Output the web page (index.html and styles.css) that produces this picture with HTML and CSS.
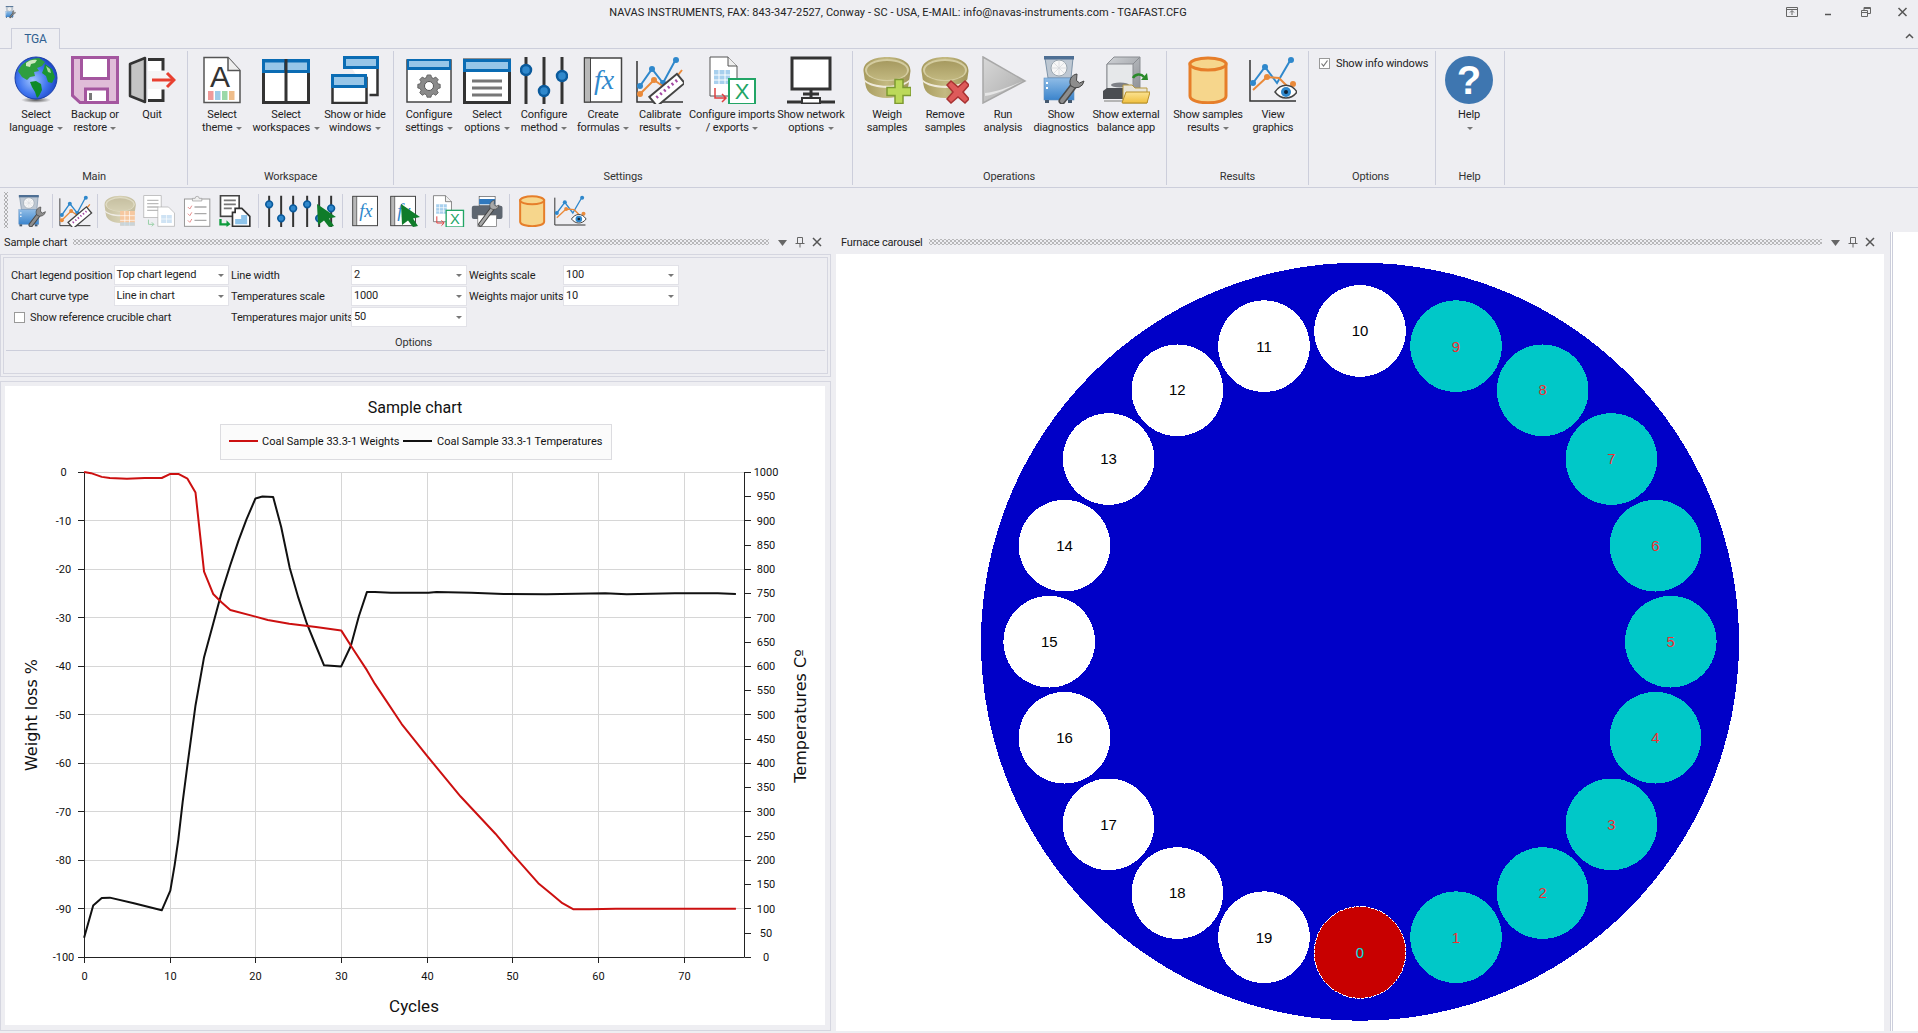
FILE: index.html
```html
<!DOCTYPE html>
<html lang="en">
<head>
<meta charset="utf-8">
<title>TGA</title>
<link rel="stylesheet" href="styles.css">
</head>
<body>
<svg class="sprite" xmlns="http://www.w3.org/2000/svg">
<defs>
<radialGradient id="g-globe" cx=".42" cy=".55" r=".7"><stop offset="0" stop-color="#9fc4ff"/><stop offset=".5" stop-color="#3f74ee"/><stop offset="1" stop-color="#0b2fb0"/></radialGradient>
<radialGradient id="g-shadow"><stop offset="0" stop-color="#555"/><stop offset="1" stop-color="#555" stop-opacity="0"/></radialGradient>
<linearGradient id="g-cruc" x1="0" x2="1" y1="0" y2="0"><stop offset="0" stop-color="#a79b5e"/><stop offset=".5" stop-color="#c4ba82"/><stop offset="1" stop-color="#a0945a"/></linearGradient>
<linearGradient id="g-inner" x1="0" x2="0" y1="0" y2="1"><stop offset="0" stop-color="#a69a60"/><stop offset="1" stop-color="#c2b880"/></linearGradient>
<linearGradient id="g-run" x1="0" x2="1" y1="0" y2="1"><stop offset="0" stop-color="#d8d8d8"/><stop offset=".6" stop-color="#bdbdbd"/><stop offset="1" stop-color="#9c9c9c"/></linearGradient>
<linearGradient id="g-furn" x1="0" x2="0" y1="0" y2="1"><stop offset="0" stop-color="#8fbce6"/><stop offset="1" stop-color="#3b84cc"/></linearGradient>
<linearGradient id="g-glass" x1="0" x2="1" y1="0" y2="1"><stop offset="0" stop-color="#cfd2d6"/><stop offset="1" stop-color="#8e9196"/></linearGradient>
<linearGradient id="g-folder" x1="0" x2="0" y1="0" y2="1"><stop offset="0" stop-color="#fbe392"/><stop offset="1" stop-color="#f0c040"/></linearGradient>

<symbol id="i-furnace" viewBox="0 0 48 48">
 <path d="M8 2h28l-2 20H11z" fill="#bdc7d2" stroke="#7d93a8"/>
 <rect x="7" y="0" width="30" height="3.500" fill="#4e6f94"/>
 <circle cx="22" cy="12" r="8" fill="#f7f7f7" stroke="#9aa6b0"/>
 <path d="M22 5v14M15 12h14M17 7l10 10M27 7 17 17" stroke="#d5d8dc" stroke-width=".8"/>
 <rect x="7" y="22" width="30" height="22" fill="url(#g-furn)" stroke="#5f8fc0" stroke-width=".6"/>
 <rect x="9" y="26" width="2" height="2" fill="#fff"/><rect x="9" y="31" width="2" height="2" fill="#fff"/>
 <rect x="8" y="44" width="4" height="3" fill="#44586e"/><rect x="31" y="44" width="4" height="3" fill="#44586e"/>
 <path d="M25 45 38 28" stroke="#4b4b4b" stroke-width="7" stroke-linecap="round"/>
 <path d="M25 45 38 28" stroke="#8d8d8d" stroke-width="4" stroke-linecap="round"/>
 <path d="M40 18a8 8 0 0 0-6 12 8 8 0 0 0 13-5l-4.500 2-3-2.500z" fill="#8d8d8d" stroke="#444"/>
</symbol>

<symbol id="i-chart" viewBox="0 0 48 48">
 <path d="M1 5v41h46" fill="none" stroke="#333" stroke-width="1.500"/>
 <path d="M4 30 16 13l11 14L40 3" fill="none" stroke="#2f88cc" stroke-width="2"/>
 <circle cx="16" cy="13" r="3" fill="#2f88cc"/><circle cx="27" cy="27" r="3" fill="#2f88cc"/><circle cx="40" cy="4" r="3" fill="#2f88cc"/><circle cx="4" cy="30" r="3" fill="#2f88cc"/>
 <path d="M4 38 18 24l13 9 15-19" fill="none" stroke="#ea8a3a" stroke-width="2"/>
 <circle cx="18" cy="24" r="3" fill="#ea8a3a"/><circle cx="31" cy="32" r="3" fill="#ea8a3a"/><circle cx="4" cy="38" r="3" fill="#ea8a3a"/>
</symbol>

<symbol id="i-calib" viewBox="0 0 48 48">
 <use href="#i-chart"/>
 <g transform="rotate(-40 31 34)"><rect x="13" y="28" width="36" height="12" fill="#fff" stroke="#444" stroke-width="2"/><path d="M18 33h2m3 0h2m3 0h2m3 0h2m3 0h2m3 0h2" stroke="#a54aa5" stroke-width="3"/></g>
</symbol>

<symbol id="i-view" viewBox="0 0 48 48">
 <path d="M1 4v41h46" fill="none" stroke="#333" stroke-width="1.500"/>
 <path d="M4 27 16 11l12 16L42 3" fill="none" stroke="#2f88cc" stroke-width="2"/>
 <circle cx="16" cy="11" r="3" fill="#2f88cc"/><circle cx="42" cy="4" r="3" fill="#2f88cc"/><circle cx="4" cy="27" r="3" fill="#2f88cc"/>
 <path d="M4 34 18 21l12 1 14 14" fill="none" stroke="#ea8a3a" stroke-width="2"/>
 <circle cx="18" cy="21" r="3" fill="#ea8a3a"/><circle cx="44" cy="28" r="3" fill="#ea8a3a"/>
 <path d="M26 36c6-9 16-9 22 0-6 8-16 8-22 0z" fill="#fff" stroke="#444" stroke-width="1.500"/>
 <circle cx="37" cy="36" r="5" fill="#2f88cc"/><circle cx="37" cy="36" r="2" fill="#123"/>
</symbol>

<symbol id="i-crucible" viewBox="0 0 48 48">
 <path d="M.5 15C.5 5 12 1 24 1s23.500 4 23.500 14l-2 14c-1 8-9 13-21.500 13S3.500 37 2.500 29z" fill="url(#g-cruc)"/>
 <ellipse cx="24" cy="14" rx="22" ry="11" fill="#d4cca0"/>
 <ellipse cx="24" cy="14.500" rx="20" ry="9.500" fill="url(#g-inner)"/>
 <path d="M1 23c8 9 38 9 46 0l-.4 2.500c-9 8.500-36 8.500-45.200 0z" fill="#efeada"/>
</symbol>

<symbol id="i-weigh" viewBox="0 0 48 48">
 <use href="#i-crucible"/>
 <path d="M33 27h8v8h8v8h-8v8h-8v-8h-8v-8h8z" transform="translate(-1 -3.500)" fill="#bcd95a" stroke="#7d9a32" stroke-width="1.500"/>
</symbol>

<symbol id="i-remove" viewBox="0 0 48 48">
 <use href="#i-crucible"/>
 <path d="M30 25l7 6 7-6 4 4-6 7 6 7-4 4-7-6-7 6-4-4 6-7-6-7z" fill="#de5a5a" stroke="#a83232" stroke-width="1.500"/>
</symbol>

<symbol id="i-globe" viewBox="0 0 48 48">
 <ellipse cx="24" cy="44" rx="15" ry="3" fill="url(#g-shadow)"/>
 <circle cx="24" cy="22" r="21" fill="url(#g-globe)" stroke="#1a40a8"/>
 <path d="M9 10c4-5 12-8 18-8l6 4-3 4-5 2 2 3-5 1 1 4-5 1-3 3-5-3-4-6z" fill="#2f9e3e"/>
 <path d="M18 26l6-1 5 3 1 6-3 6-2 2-2-6-3-5z" fill="#0d8a2a"/>
 <path d="M33 8l7 5 3 8-3 6-4-1-2-6-4-3 2-5z" fill="#1a9632"/>
 <path d="M14 7c3-3 8-4 11-3l-2 3-4 1-1 3-4-1z" fill="#cfe8c0"/>
 <path d="M34 10l4 3 1 4-3-1z" fill="#a8d8a0"/>
</symbol>

<symbol id="i-floppy" viewBox="0 0 48 48">
 <path d="M1.500 1.500h45v45H9l-7.500-7z" fill="#e0bcd8" stroke="#a4569f" stroke-width="3"/>
 <rect x="10.500" y="1.500" width="27" height="21" fill="#fff" stroke="#a4569f" stroke-width="3"/>
 <rect x="14.500" y="33" width="22" height="13.500" fill="#fff" stroke="#a4569f" stroke-width="3"/>
 <rect x="18" y="37" width="3" height="7" fill="#777"/>
</symbol>

<symbol id="i-quit" viewBox="0 0 48 48">
 <path d="M2 8 17 2v44L2 40z" fill="#c4c4c4" stroke="#333" stroke-width="2.500" stroke-linejoin="round"/>
 <path d="M20 3h15v13H20zM20 32h15v13H20z" fill="#fff" stroke="none"/>
 <path d="M20 3.500h15v11M35 33.500v11H20" fill="none" stroke="#333" stroke-width="3"/>
 <rect x="20" y="15" width="20" height="18" fill="#f5f5f5"/>
 <path d="M24 24h20" stroke="#e84030" stroke-width="3"/><path d="M39 17l7 7-7 7" fill="none" stroke="#e84030" stroke-width="3"/>
</symbol>

<symbol id="i-theme" viewBox="0 0 48 48">
 <path d="M6 1.500h24l12 13v32H6z" fill="#fff" stroke="#555" stroke-width="1.500"/>
 <path d="M30 1.500v13h12" fill="#eee" stroke="#555" stroke-width="1.500"/>
 <text class="ico-A" x="22" y="31">A</text>
 <rect x="10" y="35" width="5.500" height="9" fill="#ef9a9a"/><rect x="17" y="35" width="5.500" height="9" fill="#9dcbe8"/><rect x="24" y="35" width="5.500" height="9" fill="#9bd8a8"/><rect x="31" y="35" width="5.500" height="9" fill="#efbd8a"/>
</symbol>

<symbol id="i-work" viewBox="0 0 48 48">
 <rect x="1.500" y="5" width="45" height="41.500" fill="#fff" stroke="#333" stroke-width="3"/>
 <rect x="0" y="3" width="48" height="14" fill="#0a6cb4"/>
 <rect x="3" y="6.500" width="19" height="7.500" fill="#97c6e8"/><rect x="25" y="6.500" width="20" height="7.500" fill="#97c6e8"/>
 <rect x="22.500" y="3" width="3" height="43" fill="#333"/>
</symbol>

<symbol id="i-winshow" viewBox="0 0 48 48">
 <path d="M14 2h32.500v37h-8" fill="#fff" stroke="#333" stroke-width="2.500"/>
 <rect x="12" y="0" width="36" height="13" fill="#0a6cb4"/><rect x="15" y="3" width="30" height="7" fill="#97c6e8"/>
 <rect x="1.500" y="22" width="34" height="25" fill="#fff" stroke="#333" stroke-width="2.500"/>
 <rect x="0" y="18" width="36" height="14" fill="#0a6cb4"/><rect x="3" y="21" width="30" height="8" fill="#97c6e8"/>
</symbol>

<symbol id="i-gearwin" viewBox="0 0 48 48">
 <rect x="2" y="4" width="44" height="42" fill="#fff" stroke="#444" stroke-width="1.500"/>
 <rect x="2" y="3" width="44" height="11" fill="#0a6cb4"/><rect x="4" y="5" width="40" height="6" fill="#97c6e8"/>
 <path d="M24 17l2.500.3.7 3 2.500 1 2.700-1.600 3.200 3.200-1.600 2.700 1 2.500 3 .7v4.600l-3 .7-1 2.500 1.600 2.700-3.200 3.200-2.700-1.600-2.500 1-.7 3h-5l-.7-3-2.500-1-2.700 1.600-3.200-3.200 1.600-2.700-1-2.500-3-.7v-4.600l3-.7 1-2.500-1.600-2.700 3.200-3.200 2.700 1.600 2.500-1 .7-3z" transform="translate(4.800 5.300) scale(.8)" fill="#8a8a8a" stroke="#555"/>
 <circle cx="24" cy="30" r="4.500" fill="#fff" stroke="#555"/>
</symbol>

<symbol id="i-opts" viewBox="0 0 48 48">
 <rect x="1.500" y="4" width="45" height="42.500" fill="#fff" stroke="#333" stroke-width="3"/>
 <rect x="0" y="3" width="48" height="13" fill="#0a6cb4"/><rect x="3" y="6" width="42" height="7" fill="#97c6e8"/>
 <path d="M9 25h30M9 32h30M9 39h30" stroke="#777" stroke-width="3"/>
</symbol>

<symbol id="i-sliders" viewBox="0 0 48 48">
 <path d="M6 1v47M24 1v47M42 1v47" stroke="#333" stroke-width="3"/>
 <circle cx="6" cy="14" r="5" fill="#2f88cc" stroke="#0a5a9c" stroke-width="2.500"/>
 <circle cx="24" cy="35" r="5" fill="#2f88cc" stroke="#0a5a9c" stroke-width="2.500"/>
 <circle cx="42" cy="20" r="5" fill="#2f88cc" stroke="#0a5a9c" stroke-width="2.500"/>
</symbol>

<symbol id="i-cursor" viewBox="0 0 48 48">
 <path d="M6 2 44 28 30 31 40 46 30 48 20 35 8 44z" fill="#0f7c2a"/>
</symbol>

<symbol id="i-fx" viewBox="0 0 48 48">
 <rect x="5.500" y="2" width="37" height="44" fill="#fff" stroke="#444" stroke-width="1.500"/>
 <rect x="5.500" y="2" width="6" height="44" fill="#b8b8b8" stroke="#444"/>
 <text class="ico-fx" x="15" y="33">fx</text>
</symbol>

<symbol id="i-imports" viewBox="0 0 48 48">
 <path d="M2 1h18l9 9v30H2z" fill="#fff" stroke="#555"/><path d="M20 1v9h9" fill="#eee" stroke="#555"/>
 <path d="M6 14h16v14H6z" fill="#a8d0ee"/><path d="M6 19h16M6 24h16M11 14v14M17 14v14" stroke="#fff"/>
 <path d="M7 32v10h10m-3-4 4 4-4 4" fill="none" stroke="#e04040" stroke-width="1.500"/>
 <rect x="21" y="23" width="26" height="25" fill="#fff" stroke="#22a566" stroke-width="2"/>
 <text class="ico-x" x="34" y="43">X</text>
</symbol>

<symbol id="i-net" viewBox="0 0 48 48">
 <rect x="5" y="2" width="38" height="31" fill="#fff" stroke="#333" stroke-width="3"/>
 <path d="M24 33v8M16 38h16" stroke="#333" stroke-width="3"/>
 <path d="M0 46h15M33 46h15" stroke="#333" stroke-width="3"/>
 <rect x="15" y="42" width="18" height="5.500" fill="#fff" stroke="#333" stroke-width="2"/>
</symbol>

<symbol id="i-run" viewBox="0 0 48 48">
 <path d="M4 1l42 24L4 47z" fill="url(#g-run)" stroke="#a8a8a8" stroke-width="1.500"/>
 <path d="M6 40c14-2 28-10 38-15-12 5-24 11-38 12z" fill="#e6e6e6"/>
</symbol>

<symbol id="i-balance" viewBox="0 0 48 48">
 <path d="M5 8 12 1h26v32H5z" fill="url(#g-glass)" stroke="#8a8d92"/>
 <path d="M5 8h26v25H5zM31 8l7-7" fill="#e6e8ea" stroke="#8a8d92"/>
 <ellipse cx="18" cy="29" rx="9" ry="2.500" fill="#7d8086"/>
 <path d="M1 35 5 32h30v11H1z" fill="#4a4d52"/>
 <path d="M2 44h28v2H2z" fill="#b5b5b5"/>
 <path d="M21 29h9l3 3h12v15H21z" fill="#e8e4d6" stroke="#b89a40"/>
 <path d="M24 36h24l-3 11H20z" fill="url(#g-folder)" stroke="#b8902a"/>
 <path d="M31 22c2-4 8-5 11-1" fill="none" stroke="#2a8a2a" stroke-width="2.500"/><path d="M39 24h7l-1-7z" fill="#2a8a2a"/>
</symbol>

<symbol id="i-cyl" viewBox="0 0 48 48">
 <path d="M6 8v32c0 9 36 9 36 0V8z" fill="#f6d68c" stroke="#e67e2a" stroke-width="3"/>
 <ellipse cx="24" cy="8" rx="18" ry="6" fill="#f6d68c" stroke="#e67e2a" stroke-width="3"/>
</symbol>

<symbol id="i-help" viewBox="0 0 48 48">
 <circle cx="24" cy="24" r="24" fill="#3e76b0"/>
 <text class="ico-q" x="24" y="38">?</text>
</symbol>

<symbol id="i-cruc2" viewBox="0 0 48 48">
 <g opacity=".55"><use href="#i-crucible"/></g>
 <rect x="24" y="24" width="22" height="22" fill="#f6c8a0"/><path d="M24 31h22M24 38h22M31 24v22M38 24v22" stroke="#fff"/><path d="M24 41h22v5H24z" fill="#b8d8f0" opacity=".7"/>
</symbol>

<symbol id="i-docs" viewBox="0 0 48 48">
 <rect x="1" y="1" width="26" height="33" fill="#fff" stroke="#aaa"/>
 <path d="M6 8h17M6 13h17M6 18h17M6 23h17" stroke="#bbb" stroke-width="2"/>
 <path d="M22 18h16l9 9v20H22z" fill="#fff" stroke="#aaa"/>
 <path d="M27 30h16v12H27z" fill="#cfe3f4"/><path d="M27 36h16M35 30v12" stroke="#fff"/>
 <path d="M8 37v7h8m-3-3 3 3-3 3" fill="none" stroke="#9ad0a8" stroke-width="1.500"/>
</symbol>

<symbol id="i-clip" viewBox="0 0 48 48">
 <rect x="5" y="6" width="38" height="41" fill="#fff" stroke="#999" stroke-width="1.500"/>
 <path d="M17 9V5h4a3 3 0 0 1 6 0h4v4z" fill="#eee" stroke="#999"/>
 <path d="M20 18h18M20 28h18M20 38h18" stroke="#aaa" stroke-width="2"/>
 <path d="M10 18l3 3 3-5M10 28l3 3 3-5M10 38l3 3 3-5" fill="none" stroke="#e89090" stroke-width="1.500"/>
</symbol>

<symbol id="i-docexp" viewBox="0 0 48 48">
 <rect x="2" y="1" width="28" height="31" fill="#fff" stroke="#444" stroke-width="2.500"/>
 <path d="M7 8h18M7 14h18M7 20h12" stroke="#777" stroke-width="2.500"/>
 <path d="M20 26h4v-6h10l12 12v15H20z" fill="#fff" stroke="#333" stroke-width="2.500"/>
 <path d="M24 36h18v8H24z" fill="#8fc4ea"/><path d="M33 30h9v6h-9z" fill="#8fc4ea"/>
 <path d="M2 36v8h10" fill="none" stroke="#0d9b3c" stroke-width="3.500"/><path d="M11 38l6 6-6 4z" fill="#0d9b3c"/>
</symbol>

<symbol id="i-printer" viewBox="0 0 48 48">
 <rect x="12" y="2" width="24" height="14" fill="#fff" stroke="#555"/><rect x="12" y="6" width="24" height="8" fill="#2f78bd"/>
 <rect x="1" y="16" width="46" height="20" rx="3" fill="#5e6670"/>
 <rect x="10" y="30" width="28" height="17" fill="#fff" stroke="#666"/>
 <path d="M14 44 32 20" stroke="#444" stroke-width="7" stroke-linecap="round"/>
 <path d="M14 44 32 20" stroke="#a8a8a8" stroke-width="4" stroke-linecap="round"/>
 <path d="M35 8a8 8 0 0 0-6 12 8 8 0 0 0 13-5l-4.500 2-3-2.500z" fill="#a8a8a8" stroke="#444"/>
</symbol>
</defs>
</svg>

<div class="app">
 <header class="titlebar">
  <svg class="app-ico" width="12" height="16" viewBox="0 0 48 64"><use href="#i-furnace" width="48" height="64"/></svg>
  <div class="title">NAVAS INSTRUMENTS, FAX: 843-347-2527, Conway - SC - USA, E-MAIL: info@navas-instruments.com - TGAFAST.CFG</div>
  <div class="winctl">
   <svg width="16" height="16" viewBox="0 0 16 16"><path class="ctl-s" d="M2.500 3.500h11v9h-11zM2.500 5.500h11M8 11V7M6 8.500l2-2 2 2"/></svg>
   <svg width="16" height="16" viewBox="0 0 16 16"><path class="ctl-s2" d="M4 10.500h6"/></svg>
   <svg width="16" height="16" viewBox="0 0 16 16"><path class="ctl-s" d="M3.500 6.500h6v6h-6zM3.500 8.500h6M6 6.500v-3h6.500v6h-3M6 4.500h6.500"/></svg>
   <svg width="16" height="16" viewBox="0 0 16 16"><path class="ctl-s2" d="M3.500 4l8 8M11.500 4l-8 8"/></svg>
  </div>
 </header>

 <div class="tabrow">
  <div class="tab">TGA</div>
  <svg class="collapse" width="9" height="6" viewBox="0 0 9 6"><path d="M1 5l3.500-3.500L8 5" fill="none" stroke="#555" stroke-width="1.500"/></svg>
 </div>

 <section class="ribbon">
  <div class="group g-main">
   <div class="btns">
    <div class="rb w58"><svg class="rb-ico"><use href="#i-globe"/></svg><span>Select</span><span>language <i class="caret"></i></span></div>
    <div class="rb w60"><svg class="rb-ico"><use href="#i-floppy"/></svg><span>Backup or</span><span>restore <i class="caret"></i></span></div>
    <div class="rb w54"><svg class="rb-ico"><use href="#i-quit"/></svg><span>Quit</span></div>
   </div>
   <div class="glabel">Main</div>
  </div>
  <div class="group g-work">
   <div class="btns">
    <div class="rb w64"><svg class="rb-ico"><use href="#i-theme"/></svg><span>Select</span><span>theme <i class="caret"></i></span></div>
    <div class="rb w64"><svg class="rb-ico"><use href="#i-work"/></svg><span>Select</span><span>workspaces <i class="caret"></i></span></div>
    <div class="rb w74"><svg class="rb-ico"><use href="#i-winshow"/></svg><span>Show or hide</span><span>windows <i class="caret"></i></span></div>
   </div>
   <div class="glabel">Workspace</div>
  </div>
  <div class="group g-set">
   <div class="btns">
    <div class="rb w58"><svg class="rb-ico"><use href="#i-gearwin"/></svg><span>Configure</span><span>settings <i class="caret"></i></span></div>
    <div class="rb w58"><svg class="rb-ico"><use href="#i-opts"/></svg><span>Select</span><span>options <i class="caret"></i></span></div>
    <div class="rb w56"><svg class="rb-ico"><use href="#i-sliders"/></svg><span>Configure</span><span>method <i class="caret"></i></span></div>
    <div class="rb w62"><svg class="rb-ico"><use href="#i-fx"/></svg><span>Create</span><span>formulas <i class="caret"></i></span></div>
    <div class="rb w52"><svg class="rb-ico"><use href="#i-calib"/></svg><span>Calibrate</span><span>results <i class="caret"></i></span></div>
    <div class="rb w92"><svg class="rb-ico"><use href="#i-imports"/></svg><span>Configure imports</span><span>/ exports <i class="caret"></i></span></div>
    <div class="rb w66"><svg class="rb-ico"><use href="#i-net"/></svg><span>Show network</span><span>options <i class="caret"></i></span></div>
   </div>
   <div class="glabel">Settings</div>
  </div>
  <div class="group g-ops">
   <div class="btns">
    <div class="rb w58"><svg class="rb-ico"><use href="#i-weigh"/></svg><span>Weigh</span><span>samples</span></div>
    <div class="rb w58"><svg class="rb-ico"><use href="#i-remove"/></svg><span>Remove</span><span>samples</span></div>
    <div class="rb w58"><svg class="rb-ico"><use href="#i-run"/></svg><span>Run</span><span>analysis</span></div>
    <div class="rb w58"><svg class="rb-ico"><use href="#i-furnace"/></svg><span>Show</span><span>diagnostics</span></div>
    <div class="rb w72"><svg class="rb-ico"><use href="#i-balance"/></svg><span>Show external</span><span>balance app</span></div>
   </div>
   <div class="glabel">Operations</div>
  </div>
  <div class="group g-res">
   <div class="btns">
    <div class="rb w66"><svg class="rb-ico"><use href="#i-cyl"/></svg><span>Show samples</span><span>results <i class="caret"></i></span></div>
    <div class="rb w64"><svg class="rb-ico"><use href="#i-view"/></svg><span>View</span><span>graphics</span></div>
   </div>
   <div class="glabel">Results</div>
  </div>
  <div class="group g-opt">
   <div class="btns">
    <label class="info"><i class="check on"><svg width="9" height="9" viewBox="0 0 9 9"><path d="M1.500 4.500l2 2.500 4-5.500" fill="none" stroke="#777" stroke-width="1.200"/></svg></i>Show info windows</label>
   </div>
   <div class="glabel">Options</div>
  </div>
  <div class="group g-help">
   <div class="btns">
    <div class="rb w66"><svg class="rb-ico"><use href="#i-help"/></svg><span>Help</span><span><i class="caret"></i></span></div>
   </div>
   <div class="glabel">Help</div>
  </div>
 </section>

 <nav class="quick">
  <div class="grip"></div>
  <svg class="qi"><use href="#i-furnace"/></svg>
  <i class="qsep"></i>
  <svg class="qi"><use href="#i-calib"/></svg>
  <i class="qsep"></i>
  <svg class="qi"><use href="#i-cruc2"/></svg>
  <svg class="qi"><use href="#i-docs"/></svg>
  <svg class="qi"><use href="#i-clip"/></svg>
  <svg class="qi"><use href="#i-docexp"/></svg>
  <i class="qsep"></i>
  <svg class="qi"><use href="#i-sliders"/></svg>
  <svg class="qi"><use href="#i-sliders"/><use href="#i-cursor" x="14" y="8" width="24" height="24"/></svg>
  <i class="qsep"></i>
  <svg class="qi"><use href="#i-fx"/></svg>
  <svg class="qi"><use href="#i-fx"/><use href="#i-cursor" x="14" y="8" width="24" height="24"/></svg>
  <i class="qsep"></i>
  <svg class="qi"><use href="#i-imports"/></svg>
  <svg class="qi"><use href="#i-printer"/></svg>
  <i class="qsep"></i>
  <svg class="qi"><use href="#i-cyl"/></svg>
  <svg class="qi"><use href="#i-view"/></svg>
 </nav>

 <main class="dock">
  <section class="pane-left">
   <div class="pane-head">
    <span class="pane-title">Sample chart</span><span class="dots"></span>
    <svg class="pane-ico" width="50" height="12" viewBox="0 0 50 12"><path d="M1 4h9L5.500 10z" fill="#666"/><path class="ctl-s" d="M20.500 1.500h5v6h-5zM18.500 7.500h9M23 7.500v4"/><path class="ctl-s2" d="M36 2l8 8M44 2l-8 8"/></svg>
   </div>
   <div class="optbox">
    <div class="optinner">
     <div class="fields">
      <span class="lab">Chart legend position</span><span class="combo">Top chart legend<i class="caret"></i></span>
      <span class="lab lab-i">Line width</span><span class="combo">2<i class="caret"></i></span>
      <span class="lab lab-i">Weights scale</span><span class="combo">100<i class="caret"></i></span>

      <span class="lab">Chart curve type</span><span class="combo">Line in chart<i class="caret"></i></span>
      <span class="lab lab-i">Temperatures scale</span><span class="combo">1000<i class="caret"></i></span>
      <span class="lab lab-i">Weights major units</span><span class="combo">10<i class="caret"></i></span>

      <label class="refchk"><i class="check"></i>Show reference crucible chart</label>
      <span class="lab lab-i">Temperatures major units</span><span class="combo">50<i class="caret"></i></span>
     </div>
     <div class="optlabel">Options</div>
    </div>
   </div>
   <div class="chartbox">
    <svg class="chart" viewBox="5 386 820 639" xmlns="http://www.w3.org/2000/svg">
     <text class="c-title" x="415" y="413">Sample chart</text>
     <rect class="c-legend" x="220.500" y="424.500" width="391" height="35"/>
     <path class="c-red" d="M229 441h29"/><text class="c-leg" x="262" y="445">Coal Sample 33.3-1 Weights</text>
     <path class="c-blk" d="M403 441h29"/><text class="c-leg" x="437" y="445">Coal Sample 33.3-1 Temperatures</text>

     <g transform="translate(0 -1)">
     <path class="c-grid" d="M84 473.500H744M84 521.500H744M84 570.500H744M84 618.500H744M84 667.500H744M84 715.500H744M84 764.500H744M84 812.500H744M84 861.500H744M84 909.500H744M170.500 473V958M255.500 473V958M341.500 473V958M427.500 473V958M512.500 473V958M598.500 473V958M684.500 473V958"/>
     <path class="c-axis" d="M84.500 473V958.500H744.500V473"/>
     <path class="c-axis" d="M78 473.500h6M78 521.500h6M78 570.500h6M78 618.500h6M78 667.500h6M78 715.500h6M78 764.500h6M78 812.500h6M78 861.500h6M78 909.500h6M78 958.500h6"/>
     <path class="c-axis" d="M745 473.500h6M745 497.500h6M745 521.500h6M745 546.500h6M745 570.500h6M745 594.500h6M745 618.500h6M745 643.500h6M745 667.500h6M745 691.500h6M745 715.500h6M745 740.500h6M745 764.500h6M745 788.500h6M745 812.500h6M745 837.500h6M745 861.500h6M745 885.500h6M745 909.500h6M745 934.500h6M745 958.500h6"/>
     <path class="c-axis" d="M84.500 958v6M170.500 958v6M255.500 958v6M341.500 958v6M427.500 958v6M512.500 958v6M598.500 958v6M684.500 958v6"/>

     <g class="c-tick">
      <text x="63.500" y="477">0</text><text x="63.500" y="525.500">-10</text><text x="63.500" y="574">-20</text><text x="63.500" y="622.500">-30</text><text x="63.500" y="671">-40</text><text x="63.500" y="719.500">-50</text><text x="63.500" y="768">-60</text><text x="63.500" y="816.500">-70</text><text x="63.500" y="865">-80</text><text x="63.500" y="913.500">-90</text><text x="63.500" y="962">-100</text>
      <text x="766" y="477">1000</text><text x="766" y="501">950</text><text x="766" y="525.500">900</text><text x="766" y="550">850</text><text x="766" y="574">800</text><text x="766" y="598">750</text><text x="766" y="622.500">700</text><text x="766" y="647">650</text><text x="766" y="671">600</text><text x="766" y="695">550</text><text x="766" y="719.500">500</text><text x="766" y="744">450</text><text x="766" y="768">400</text><text x="766" y="792">350</text><text x="766" y="816.500">300</text><text x="766" y="841">250</text><text x="766" y="865">200</text><text x="766" y="889">150</text><text x="766" y="913.500">100</text><text x="766" y="938">50</text><text x="766" y="962">0</text>
      <text x="84.500" y="981">0</text><text x="170.500" y="981">10</text><text x="255.500" y="981">20</text><text x="341.500" y="981">30</text><text x="427.500" y="981">40</text><text x="512.500" y="981">50</text><text x="598.500" y="981">60</text><text x="684.500" y="981">70</text>
     </g>

     <g transform="translate(0 450) scale(.5356 .3717)">
      <polyline class="c-line c-blk" points="157,1315 174,1228 190,1208 205,1207 250,1222 302,1241 318,1188 326,1120 333,1050 341,950 350,850 365,690 381,560 398,470 414,385 430,312 445,248 460,190 477,133 490,128 510,129 525,210 541,320 557,400 573,470 590,530 605,582 637,585 655,530 670,450 685,385 700,385 730,387 800,387 815,385 880,387 940,390 1020,391 1130,388 1170,391 1260,388 1340,388 1374,390"/>
      <polyline class="c-line c-red" points="157,62 170,65 190,75 205,78 237,80 270,78 302,78 318,67 333,67 350,80 365,117 381,330 398,390 414,413 430,433 477,451 500,460 540,470 590,479 637,488 660,540 685,595 700,632 720,675 750,740 775,785 797,825 860,935 925,1035 957,1090 1005,1168 1030,1198 1050,1222 1070,1238 1100,1238 1150,1237 1374,1237"/>
     </g>
     </g>

     <text class="c-axt" x="414" y="1012">Cycles</text>
     <text class="c-axt2" transform="translate(37 715) rotate(-90)">Weight loss %</text>
     <text class="c-axt2" transform="translate(806 716) rotate(-90)">Temperatures Cº</text>
    </svg>
   </div>
  </section>

  <section class="pane-right">
   <div class="pane-head">
    <span class="pane-title">Furnace carousel</span><span class="dots"></span>
    <svg class="pane-ico" width="50" height="12" viewBox="0 0 50 12"><path d="M1 4h9L5.500 10z" fill="#666"/><path class="ctl-s" d="M20.500 1.500h5v6h-5zM18.500 7.500h9M23 7.500v4"/><path class="ctl-s2" d="M36 2l8 8M44 2l-8 8"/></svg>
   </div>
   <div class="carousel">
    <svg class="wheel" viewBox="836 255 1048 777" xmlns="http://www.w3.org/2000/svg">
     <circle class="disc" cx="1360" cy="642.700" r="379"/>
     <g transform="translate(1360 642.700) scale(.996) translate(-1360 -642.700)">
     <g class="holes">
      <circle class="h-red" cx="1360" cy="954.700" r="46"/><circle class="h-red-o" cx="1360" cy="954.700" r="46"/>
      <circle class="h-teal" cx="1456.400" cy="939.400" r="46"/><circle class="h-teal" cx="1543.400" cy="895.100" r="46"/><circle class="h-teal" cx="1612.400" cy="826.100" r="46"/><circle class="h-teal" cx="1656.700" cy="739.100" r="46"/><circle class="h-teal" cx="1672" cy="642.700" r="46"/><circle class="h-teal" cx="1656.700" cy="546.300" r="46"/><circle class="h-teal" cx="1612.400" cy="459.300" r="46"/><circle class="h-teal" cx="1543.400" cy="390.300" r="46"/><circle class="h-teal" cx="1456.400" cy="346" r="46"/>
      <circle class="h-white" cx="1360" cy="330.700" r="46"/><circle class="h-white" cx="1263.600" cy="346" r="46"/><circle class="h-white" cx="1176.600" cy="390.300" r="46"/><circle class="h-white" cx="1107.600" cy="459.300" r="46"/><circle class="h-white" cx="1063.300" cy="546.300" r="46"/><circle class="h-white" cx="1048" cy="642.700" r="46"/><circle class="h-white" cx="1063.300" cy="739.100" r="46"/><circle class="h-white" cx="1107.600" cy="826.100" r="46"/><circle class="h-white" cx="1176.600" cy="895.100" r="46"/><circle class="h-white" cx="1263.600" cy="939.400" r="46"/>
     </g>
     <g class="nums">
      <text class="n-cyan" x="1360" y="960">0</text>
      <g class="n-red"><text x="1456.400" y="945">1</text><text x="1543.400" y="900.500">2</text><text x="1612.400" y="831.500">3</text><text x="1656.700" y="744.500">4</text><text x="1672" y="648">5</text><text x="1656.700" y="551.500">6</text><text x="1612.400" y="464.500">7</text><text x="1543.400" y="395.500">8</text><text x="1456.400" y="351.500">9</text></g>
      <g class="n-blk"><text x="1360" y="336">10</text><text x="1263.600" y="351.500">11</text><text x="1176.600" y="395.500">12</text><text x="1107.600" y="464.500">13</text><text x="1063.300" y="551.500">14</text><text x="1048" y="648">15</text><text x="1063.300" y="744.500">16</text><text x="1107.600" y="831.500">17</text><text x="1176.600" y="900.500">18</text><text x="1263.600" y="945">19</text></g>
     </g>
     </g>
    </svg>
   </div>
  </section>

  <aside class="pane-side"></aside>
 </main>
</div>
</body>
</html>
```

FILE: styles.css
```css
* { box-sizing: border-box; }
html, body { margin: 0; padding: 0; }
body {
  width: 1918px; height: 1033px; overflow: hidden;
  background: #eeeef2; color: #1e1e1e;
  font: 11px/13px Roboto, "Liberation Sans", sans-serif;
  letter-spacing: -.15px;
}
i { font-style: normal; }
.sprite { position: absolute; width: 0; height: 0; }
.app { display: flex; flex-direction: column; height: 1033px; }

/* title bar */
.titlebar { display: grid; grid-template-columns: 20px 1756px 142px; height: 28px; align-items: start; }
.app-ico { margin: 4px 0 0 4px; }
.title { text-align: center; padding-top: 6px; font-size: 11px; letter-spacing: .06px; color: #222; white-space: nowrap; }
.winctl { display: flex; gap: 21px; padding: 4px 0 0 8px; }
.ctl-s { fill: none; stroke: #666; stroke-width: 1; }
.ctl-s2 { fill: none; stroke: #555; stroke-width: 1.5; }

/* tabs */
.tabrow { height: 20px; display: flex; justify-content: space-between; align-items: flex-end; position: relative; z-index: 1; }
.tab {
  margin: 0 0 -1px 11px; width: 49px; height: 21px; text-align: center; line-height: 20px; font-size: 12px;
  color: #2f5f90; background: #eeeef2; border: 1px solid #cccedb; border-bottom: 0;
}
.collapse { margin: 0 4px 9px 0; }

/* ribbon */
.ribbon { height: 140px; display: flex; padding-top: 2px; border-top: 1px solid #cccedb; border-bottom: 1px solid #cccedb; }
.group { display: flex; flex-direction: column; height: 134px; border-right: 1px solid #cccedb; flex: none; }
.g-main { width: 188px; padding-left: 7px; }
.g-work { width: 206px; padding-left: 2px; }
.g-set { width: 459px; padding-left: 6px; }
.g-ops { width: 314px; padding-left: 5px; }
.g-res { width: 142px; padding-left: 8px; }
.g-opt { width: 127px; padding-left: 10px; }
.g-help { width: 69px; }
.btns { flex: 1; display: flex; padding-top: 5px; min-height: 0; }
.glabel { height: 16px; line-height: 16px; text-align: center; color: #333; white-space: nowrap; padding-right: 6px; }
.g-work .glabel { padding-right: 2px; }
.g-res .glabel { padding-right: 8px; }
.g-opt .glabel { margin-left: -10px; padding-right: 3px; }
.g-help .glabel { padding-right: 1px; }
.rb { display: flex; flex-direction: column; align-items: center; flex: none; white-space: nowrap; color: #222; }
.rb span { display: block; height: 13px; }
.rb-ico { width: 48px; height: 48px; margin-bottom: 4px; flex: none; }
.w52 { width: 52px; } .w54 { width: 54px; } .w56 { width: 56px; } .w58 { width: 58px; }
.w60 { width: 60px; } .w62 { width: 62px; } .w64 { width: 64px; } .w66 { width: 66px; }
.w72 { width: 72px; } .w74 { width: 74px; } .w92 { width: 92px; }
.caret { display: inline-block; vertical-align: middle; margin-left: 1px; border: 3px solid transparent; border-top: 3px solid #777; border-bottom: 0; }
.info { display: flex; align-items: center; gap: 6px; height: 12px; white-space: nowrap; color: #222; margin-top: 1px; }
.check { display: flex; align-items: center; justify-content: center; flex: none; width: 11px; height: 11px; border: 1px solid #999; background: #fff; }

/* quick toolbar */
.quick { height: 44px; display: flex; align-items: center; padding-left: 4px; flex: none; }
.grip { width: 4px; height: 36px; margin-right: 2.500px; background-image: radial-gradient(#666 .6px, transparent .8px), radial-gradient(#666 .6px, transparent .8px); background-size: 4px 4px; background-position: 0 0, 2px 2px; }
.qi { width: 38.300px; height: 32px; flex: none; margin-top: 2px; }
.qsep { flex: none; width: 1px; height: 34px; margin: 2px 3.100px 0; background: #cccedb; }

/* dock panes */
.dock { flex: 1; display: flex; min-height: 0; }
.pane-left { width: 834px; padding-right: 3px; display: flex; flex-direction: column; flex: none; }
.pane-right { width: 1056px; padding: 0 6px 2px 2px; display: flex; flex-direction: column; flex: none; }
.pane-side { flex: 1; border-left: 3px double #cccedb; background: #fff; margin-bottom: 2px; }
.pane-head { height: 22px; display: flex; align-items: center; gap: 6px; flex: none; padding: 0 4px 2px 4px; }
.pane-right .pane-head { padding-left: 5px; }
.pane-title { white-space: nowrap; }
.dots { flex: 1; height: 6px; background-image: radial-gradient(#777 .6px, transparent .8px), radial-gradient(#777 .6px, transparent .8px); background-size: 4px 4px; background-position: 0 0, 2px 2px; }
.pane-ico { flex: none; margin-left: 2px; }

.optbox { height: 123px; border: 1px solid #d5d6e0; padding: 2px; flex: none; }
.optinner { height: 100%; border: 1px solid #d5d6e0; padding: 7px 2px 0; }
.fields { display: grid; grid-template-columns: 102.500px 115.500px 122px 116px 96px 116px; grid-auto-rows: 20px; row-gap: 1px; padding-left: 5px; align-items: center; }
.lab { white-space: nowrap; }
.lab-i { padding-left: 2px; }
.combo { display: block; height: 20px; line-height: 18px; border: 1px solid #e2e2e8; background: #fff; padding-left: 2px; position: relative; }
.combo .caret { position: absolute; right: 4px; top: 8px; margin: 0; }
.refchk { grid-column: 1 / span 2; display: flex; align-items: center; gap: 5px; margin-left: 3px; white-space: nowrap; }
.optlabel { margin: 8px 0 0; height: 16px; line-height: 15px; text-align: center; border-bottom: 1px solid #cccedb; color: #333; padding-right: 4px; }

.chartbox { margin-top: 4px; height: 650px; border: 1px solid #d5d6e0; padding: 4px 5px 5px 4px; flex: none; }
.chart { display: block; width: 820px; height: 639px; background: #fff; letter-spacing: 0; }
.chart text { font-family: Roboto, "Liberation Sans", sans-serif; fill: #111; }
.c-title { font-size: 16px; text-anchor: middle; }
.c-legend { fill: #fbfbfb; stroke: #dcdce0; }
.c-leg { font-size: 11px; }
.c-grid { fill: none; stroke: #d6d6d6; stroke-width: 1; }
.c-axis { fill: none; stroke: #222; stroke-width: 1; }
.c-tick text { font-size: 11px; text-anchor: middle; }
.c-red { fill: none; stroke: #cc1010; stroke-width: 2; }
.c-blk { fill: none; stroke: #111; stroke-width: 2; }
.c-line { vector-effect: non-scaling-stroke; stroke-linejoin: round; }
.c-axt { font-size: 17px; text-anchor: middle; }
.chart .c-axt2 { font-family: "DejaVu Sans", sans-serif; font-size: 16px; text-anchor: middle; }

.carousel { flex: 1; min-height: 0; background: #fff; }
.wheel { display: block; width: 1048px; height: 777px; }
.disc { fill: #0000c8; shape-rendering: crispEdges; }
.holes circle { shape-rendering: crispEdges; }
.h-teal { fill: #00c8c8; }
.h-white { fill: #fff; }
.h-red { fill: #c80000; }
.h-red-o { fill: none; stroke: #fff; stroke-width: 1; stroke-dasharray: 3 1; }
.nums text { font-family: "Liberation Sans", sans-serif; font-size: 15px; letter-spacing: 0; text-anchor: middle; }
.n-cyan { fill: #00e0e0; }
.n-red text { fill: #f03030; }
.n-blk text { fill: #000; }

/* text inside icons */
.ico-A { font: 30px "Liberation Sans", sans-serif; fill: #333; text-anchor: middle; }
.ico-fx { font: italic 28px "Liberation Serif", serif; fill: #2f88cc; }
.ico-x { font: 22px "Liberation Sans", sans-serif; fill: #22a566; text-anchor: middle; }
.ico-q { font: bold 40px "Liberation Sans", sans-serif; fill: #fff; text-anchor: middle; }
```
